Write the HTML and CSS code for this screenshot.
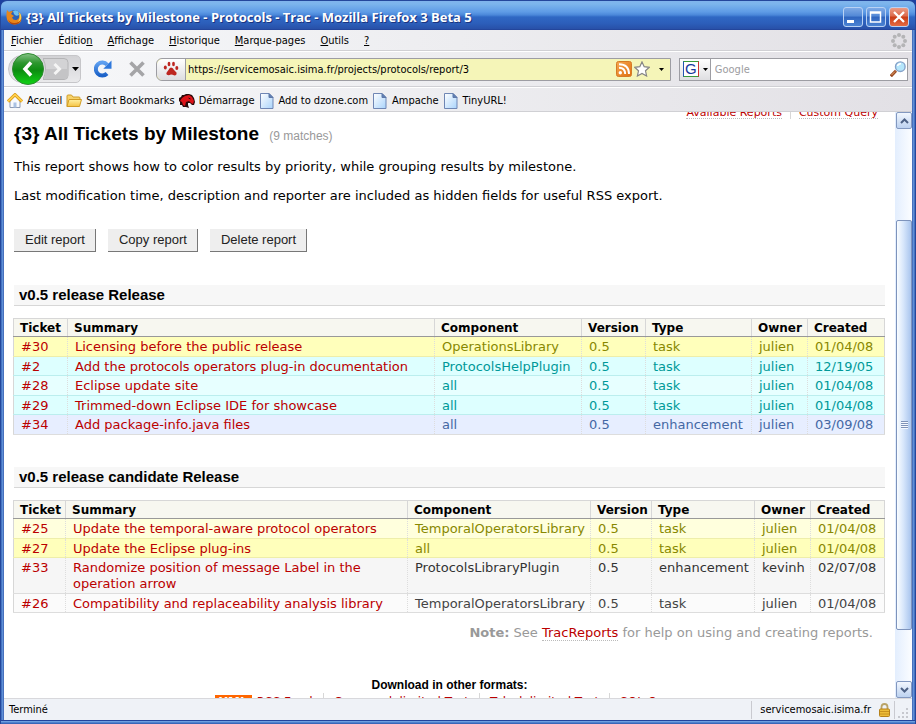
FILE: index.html
```html
<!DOCTYPE html>
<html lang="fr">
<head>
<meta charset="utf-8">
<title>{3} All Tickets by Milestone - Protocols - Trac</title>
<link rel="stylesheet" href="styles.css">
</head>
<body>
<svg class="defs" aria-hidden="true">
  <defs>
    <linearGradient id="paper" x1="0" y1="0" x2="1" y2="1"><stop offset="0" stop-color="#fff"/><stop offset="1" stop-color="#a9d3fb"/></linearGradient>
    <linearGradient id="green" x1="0" y1="0" x2="0" y2="1"><stop offset="0" stop-color="#86c287"/><stop offset=".3" stop-color="#2d972f"/><stop offset=".55" stop-color="#0c8d10"/><stop offset="1" stop-color="#0fd414"/></linearGradient>
    <linearGradient id="blue" x1="0" y1="0" x2="0" y2="1"><stop offset="0" stop-color="#5fa0f0"/><stop offset="1" stop-color="#1c62c8"/></linearGradient>
    <linearGradient id="orange" x1="0" y1="0" x2="1" y2="1"><stop offset="0" stop-color="#f6a850"/><stop offset="1" stop-color="#df6e10"/></linearGradient>
    <linearGradient id="gold" x1="0" y1="0" x2="0" y2="1"><stop offset="0" stop-color="#fff0a0"/><stop offset="1" stop-color="#f4c344"/></linearGradient>
    <symbol id="page" viewBox="0 0 16 16"><path d="M1.500 .5h8.500l4 4v11h-12.500z" fill="url(#paper)" stroke="#6f86b4"/><path d="M10 .5v4h4z" fill="#5f80b5" stroke="#5f78a8"/></symbol>
  </defs>
</svg>
<div class="window">
  <header class="titlebar">
    <svg class="icon" viewBox="0 0 16 16"><circle cx="8.500" cy="7.500" r="6.500" fill="#2b62b8"/><path d="M7 2q3-2 6 1-1 1 0 3-3 2-5-1z" fill="#6fc0ee"/><path d="M1 1l2 2q2-1 4-1L5 5l3 2-2 1.500q1 3 4.500 2.500 3-1 3-5l-1-3q3 2.500 3 6 0 6.500-7 6.500Q1 15 .5 8 .3 4 1 1z" fill="#e8861c"/><path d="M2 10q2 4.500 7 4 4 0 6-4-1 5.500-7 5.500-4.500 0-6-5.500z" fill="#b4480e"/><path d="M13 3q3 3 2 7-1 2-3 3 2.500-4 1-10z" fill="#ffd24a"/></svg>
    <h1 class="caption">{3} All Tickets by Milestone - Protocols - Trac - Mozilla Firefox 3 Beta 5</h1>
    <button class="winbtn" aria-label="Réduire"><svg viewBox="0 0 18 18"><path d="M3 12h7v3H3z" fill="#fff"/></svg></button>
    <button class="winbtn" aria-label="Agrandir"><svg viewBox="0 0 18 18"><path d="M3.500 4h10v10h-10zM3 5h11" fill="none" stroke="#fff" stroke-width="1.500"/></svg></button>
    <button class="winbtn close" aria-label="Fermer"><svg viewBox="0 0 18 18"><path d="M4 4l10 10M14 4L4 14" stroke="#fff" stroke-width="2.300"/></svg></button>
  </header>
  <div class="chrome">
    <nav class="menubar">
      <button><u>F</u>ichier</button><button>Éditio<u>n</u></button><button><u>A</u>ffichage</button><button><u>H</u>istorique</button><button><u>M</u>arque-pages</button><button><u>O</u>utils</button><button><u>?</u></button>
      <svg class="icon throbber" viewBox="0 0 16 16" fill="#b4b4b6"><circle cx="8" cy="2" r="2"/><circle cx="12.300" cy="3.700" r="2"/><circle cx="14" cy="8" r="2"/><circle cx="12.300" cy="12.300" r="2"/><circle cx="8" cy="14" r="2"/><circle cx="3.700" cy="12.300" r="2"/><circle cx="2" cy="8" r="2"/><circle cx="3.700" cy="3.700" r="2"/></svg>
    </nav>
    <div class="navbar">
      <div class="history">
        <button class="back" aria-label="Précédente"><svg viewBox="0 0 32 32"><circle cx="16" cy="16" r="15.500" fill="url(#green)" stroke="#2e8a30"/><path d="M19 9.500L13 16l6 6.500" fill="none" stroke="#fff" stroke-width="3.500"/></svg></button>
        <button class="forward" aria-label="Suivante"><svg viewBox="0 0 26 24"><path d="M0 1.500h21q4 0 4 4v13q0 4-4 4H0q5-10.500 0-21z" fill="#d3d3d5" stroke="#b4b4b6"/><path d="M0 12h25v7q0 3-4 3H1q2-5 2-10z" fill="#c4c4c6"/><path d="M11.500 7l5 5-5 5" fill="none" stroke="#f5f5f5" stroke-width="3"/></svg></button>
        <button class="drop" aria-label="Pages récentes"><svg viewBox="0 0 7 4"><path d="M0 0h7L3.500 4z"/></svg></button>
      </div>
      <button class="tool" aria-label="Actualiser"><svg viewBox="0 0 18 18"><path d="M13 13.500A6.500 6.500 0 1 1 13.200 4.700" fill="none" stroke="url(#blue)" stroke-width="4"/><path d="M17.500 .5v8.300H9.300z" fill="#2f78dc"/></svg></button>
      <button class="tool" aria-label="Arrêter"><svg viewBox="0 0 18 18"><path d="M2.500 2.500l13 13M15.500 2.500l-13 13" stroke="#a5a5a7" stroke-width="3.600"/></svg></button>
      <div class="urlbar">
        <span class="site"><svg class="icon" viewBox="0 0 16 16" fill="#bd2620"><ellipse cx="6" cy="3" rx="1.400" ry="2.300"/><ellipse cx="10.500" cy="3" rx="1.400" ry="2.300"/><ellipse cx="2.300" cy="6.500" rx="1.500" ry="2"/><ellipse cx="13.800" cy="7" rx="1.500" ry="2"/><path d="M8 6.500q2 0 3 2.500l2.500 2.500q.5 3-2 3-2-1-3.500-1-2 1-3.500.5-2-1-.5-3L5.500 9Q6.500 6.500 8 6.500z"/></svg></span>
        <input class="address" type="text" aria-label="Adresse" value="https://servicemosaic.isima.fr/projects/protocols/report/3">
        <svg class="icon" viewBox="0 0 16 16"><rect x=".5" y=".5" width="15" height="15" rx="2" fill="url(#orange)" stroke="#d57a25"/><circle cx="4.300" cy="11.700" r="1.700" fill="#fff"/><path d="M3 6.800q6 0 6.200 6.200M3 3.200q10 0 10 9.800" fill="none" stroke="#fff" stroke-width="1.900"/></svg>
        <svg class="icon star" viewBox="0 0 16 16"><path d="M8 .9l2.200 4.800 5.100.6-3.800 3.500 1.100 5.200L8 12.500 3.400 15l1.100-5.200L.7 6.300l5.100-.6z" fill="#fff" stroke="#858585" stroke-width="1.200"/></svg>
        <button class="arrow" aria-label="Adresses récentes"><svg viewBox="0 0 5 3"><path d="M0 0h5L2.500 3z"/></svg></button>
      </div>
      <div class="search">
        <button class="engine" aria-label="Moteur de recherche"><span class="g">G</span><svg class="tri" viewBox="0 0 5 3"><path d="M0 0h5L2.500 3z"/></svg></button>
        <input type="text" aria-label="Recherche" placeholder="Google">
        <svg class="icon" viewBox="0 0 16 16"><path d="M.8 15.200L6 9.800" stroke="#9a4a22" stroke-width="3"/><path d="M1.500 14L5 10.500" stroke="#eba56a" stroke-width="1"/><circle cx="10.300" cy="5.700" r="4.800" fill="#b5e6fb" stroke="#86a3ca" stroke-width="1.400"/><path d="M7.500 5q.8-2.500 3.500-2.300" fill="none" stroke="#fff" stroke-width="1.500"/></svg>
      </div>
    </div>
    <nav class="bookmarks">
      <a href="#"><svg class="icon" viewBox="0 0 16 16"><path d="M3 7v7.500h10V7L8 2z" fill="#f8fafd" stroke="#8d9bb4"/><path d="M1 8.500L8 1.700l7 6.800" fill="none" stroke="#d89a17" stroke-width="3.200"/><path d="M1 8.300L8 1.700l7 6.600" fill="none" stroke="#ffcf4c" stroke-width="1.600"/><path d="M6.500 9.500h3v5h-3z" fill="#aac2e4"/></svg>Accueil</a>
      <a href="#"><svg class="icon" viewBox="0 0 16 16"><path d="M1 13.500V3q0-1 1-1h3.500l1.500 2H13q1 0 1 1v2" fill="#f6d26a" stroke="#cf9d2a"/><path d="M3 6.500h12.500l-2 7H1z" fill="url(#gold)" stroke="#d19c25"/></svg>Smart Bookmarks</a>
      <a href="#"><svg class="icon" viewBox="0 0 16 16"><path d="M0 5l2-1 1-2 2 0 2-1 3 0 3 1 2 3 1 4-1 3-2 0-2-2-2 0 0 2 1 3-3-1-3 0-1-2-2 0 0-3-1-1z" fill="#2a0a0a"/><path d="M3 5l3-2 4-1 3 2 2 4-1 3-2-1-2-2-3 1-1 4-2-1-1-3-2-1z" fill="#dc1218"/><path d="M9.500 5l2 1" stroke="#2a0a0a"/></svg>Démarrage</a>
      <a href="#"><svg class="icon"><use href="#page"/></svg>Add to dzone.com</a>
      <a href="#"><svg class="icon"><use href="#page"/></svg>Ampache</a>
      <a href="#"><svg class="icon"><use href="#page"/></svg>TinyURL!</a>
    </nav>
  </div>
  <div class="viewport">
    <main class="page">
      <ul class="ctxtnav"><li><a href="#">Available Reports</a></li><li><a href="#">Custom Query</a></li></ul>
      <h1 class="heading">{3} All Tickets by Milestone <small>(9 matches)</small></h1>
      <p>This report shows how to color results by priority, while grouping results by milestone.</p>
      <p>Last modification time, description and reporter are included as hidden fields for useful RSS export.</p>
      <div class="actions"><button>Edit report</button><button>Copy report</button><button>Delete report</button></div>

      <h2>v0.5 release Release</h2>
      <table class="tickets first">
        <colgroup><col class="ticket"><col><col class="component"><col class="version"><col class="type"><col class="owner"><col class="created"></colgroup>
        <thead><tr><th>Ticket</th><th>Summary</th><th>Component</th><th>Version</th><th>Type</th><th>Owner</th><th>Created</th></tr></thead>
        <tbody>
          <tr class="high odd"><td><a href="#">#30</a></td><td><a href="#">Licensing before the public release</a></td><td>OperationsLibrary</td><td>0.5</td><td>task</td><td>julien</td><td>01/04/08</td></tr>
          <tr class="low odd"><td><a href="#">#2</a></td><td><a href="#">Add the protocols operators plug-in documentation</a></td><td>ProtocolsHelpPlugin</td><td>0.5</td><td>task</td><td>julien</td><td>12/19/05</td></tr>
          <tr class="low"><td><a href="#">#28</a></td><td><a href="#">Eclipse update site</a></td><td>all</td><td>0.5</td><td>task</td><td>julien</td><td>01/04/08</td></tr>
          <tr class="low odd"><td><a href="#">#29</a></td><td><a href="#">Trimmed-down Eclipse IDE for showcase</a></td><td>all</td><td>0.5</td><td>task</td><td>julien</td><td>01/04/08</td></tr>
          <tr class="trivial"><td><a href="#">#34</a></td><td><a href="#">Add package-info.java files</a></td><td>all</td><td>0.5</td><td>enhancement</td><td>julien</td><td>03/09/08</td></tr>
        </tbody>
      </table>

      <h2>v0.5 release candidate Release</h2>
      <table class="tickets second">
        <colgroup><col class="ticket"><col><col class="component"><col class="version"><col class="type"><col class="owner"><col class="created"></colgroup>
        <thead><tr><th>Ticket</th><th>Summary</th><th>Component</th><th>Version</th><th>Type</th><th>Owner</th><th>Created</th></tr></thead>
        <tbody>
          <tr class="high"><td><a href="#">#25</a></td><td><a href="#">Update the temporal-aware protocol operators</a></td><td>TemporalOperatorsLibrary</td><td>0.5</td><td>task</td><td>julien</td><td>01/04/08</td></tr>
          <tr class="high odd"><td><a href="#">#27</a></td><td><a href="#">Update the Eclipse plug-ins</a></td><td>all</td><td>0.5</td><td>task</td><td>julien</td><td>01/04/08</td></tr>
          <tr class="normal odd"><td><a href="#">#33</a></td><td><a href="#">Randomize position of message Label in the operation arrow</a></td><td>ProtocolsLibraryPlugin</td><td>0.5</td><td>enhancement</td><td>kevinh</td><td>02/07/08</td></tr>
          <tr class="normal"><td><a href="#">#26</a></td><td><a href="#">Compatibility and replaceability analysis library</a></td><td>TemporalOperatorsLibrary</td><td>0.5</td><td>task</td><td>julien</td><td>01/04/08</td></tr>
        </tbody>
      </table>
      <p class="note"><strong>Note:</strong> See <a href="#">TracReports</a> for help on using and creating reports.</p>
      <section class="formats">
        <h3>Download in other formats:</h3>
        <ul><li><span class="xml">XML</span><a href="#">RSS Feed</a></li><li><a href="#">Comma-delimited Text</a></li><li><a href="#">Tab-delimited Text</a></li><li><a href="#">SQL Query</a></li></ul>
      </section>
    </main>
    <div class="scrollbar">
      <button aria-label="Défiler vers le haut"><svg viewBox="0 0 9 6"><path d="M1 5l3.500-3.500L8 5" fill="none" stroke="#4d6185" stroke-width="2"/></svg></button>
      <div class="track"><div class="thumb"><i></i></div></div>
      <button aria-label="Défiler vers le bas"><svg viewBox="0 0 9 6"><path d="M1 1l3.500 3.500L8 1" fill="none" stroke="#4d6185" stroke-width="2"/></svg></button>
    </div>
  </div>
  <footer class="status">
    <span class="state">Terminé</span>
    <span class="host">servicemosaic.isima.fr<svg class="lock" viewBox="0 0 11 14"><path d="M2.500 7V4q0-3 3-3t3 3v3" fill="none" stroke="#b9a468" stroke-width="1.800"/><rect x=".5" y="6" width="10" height="7.500" rx="1" fill="#edbd38" stroke="#b5811a"/><path d="M1 8.500h9M1 11h9" stroke="#c8921e"/></svg></span>
    <svg class="grip" viewBox="0 0 12 12" fill="#c6c8ce"><path d="M8 0h2v2H8zM4 4h2v2H4zM8 4h2v2H8zM0 8h2v2H0zM4 8h2v2H4zM8 8h2v2H8z"/></svg>
  </footer>
</div>
</body>
</html>
```
FILE: styles.css
```css
* { box-sizing: border-box; }
body { margin: 0; background: #1d3fa0; font: 11px/14px "DejaVu Sans Condensed", "DejaVu Sans", sans-serif; color: #000; }
button, input { font: inherit; color: inherit; border: 0; padding: 0; margin: 0; background: none; }
svg { display: block; flex: none; }
.defs { position: absolute; width: 0; height: 0; }
.icon { width: 16px; height: 16px; }

.window {
  display: flex; flex-direction: column; height: 100vh; overflow: hidden;
  border: solid #24479b; border-width: 1px 1px 0; border-radius: 7px 7px 0 0;
  background: linear-gradient(90deg, #3865b8, #6d9ee0 2px, #23439b 3px, #23439b calc(100% - 3px), #6d9ee0 calc(100% - 2px), #3865b8);
  padding: 0 3px;
}
.titlebar {
  display: flex; align-items: center; gap: 3px; flex: none; height: 29px; margin: 0 -3px; padding: 2px 6px 0 5px;
  background: linear-gradient(#80b4ec 0, #7cb5ec 3px, #5e9be6 11px, #4a87d9 14px, #2f68c4 16px, #2c5fbb 22px, #2850a8 28px, #1f3c90 29px);
}
.caption { flex: 1; margin: 0; padding-left: 1px; font: bold 13px/16px "Open Sans", sans-serif; color: #fff; text-shadow: 1px 1px 0 #1b3480; white-space: nowrap; }
.winbtn { width: 20px; height: 20px; border: 1px solid #b9d2f4; border-radius: 3px; background: linear-gradient(#7eaae6, #5288d6 45%, #2f65bf 50%, #4b83d3); }
.winbtn.close { background: linear-gradient(#eb9b85, #dc6a4c 45%, #c93c16 50%, #e56b43); }

.chrome { flex: none; background: linear-gradient(90deg, #f7f8fa, #ededf0 50%, #e2e0e5); }
.menubar { display: flex; align-items: center; gap: 15px; height: 21px; padding: 1px 5px 0 7px; border-bottom: 1px solid #d0d0d4; }
.throbber { margin-left: auto; }
.navbar { display: flex; align-items: center; height: 36px; padding: 0 4px; border-top: 1px solid #fff; border-bottom: 1px solid #d0d0d4; }
.history { display: flex; align-items: center; width: 73px; height: 28px; border: 1px solid #c6c6c9; border-radius: 14px 5px 5px 14px; background: linear-gradient(#d2d2d5, #e9e9eb); padding-left: 3px; margin-right: 13px; }
.back { width: 32px; height: 32px; z-index: 1; }
.forward { width: 26px; height: 24px; margin-left: -1px; }
.drop { width: 7px; margin-left: 3px; }
.tool { width: 18px; height: 18px; margin-right: 16px; }
.tool + .urlbar { margin-left: -6px; }
.urlbar { display: flex; align-items: center; gap: 2px; flex: 517; min-width: 0; height: 23px; border: 1px solid #9d9da3; border-radius: 6px 0 0 6px; background: #f5f5b8; }
.site { display: flex; align-items: center; justify-content: center; width: 29px; height: 21px; border-right: 1px solid #9d9da3; border-radius: 6px 0 0 6px; background: linear-gradient(#fff, #dddde0); }
.address, .search input { flex: 1; min-width: 0; padding-top: 2px; }
.search input { padding-left: 4px; }
.arrow { width: 5px; margin: 0 6px 0 7px; }
.search { display: flex; align-items: center; flex: 228; min-width: 0; height: 23px; margin-left: 8px; border: 1px solid #9d9da3; background: #fff; padding-right: 1px; }
.search input::placeholder { color: #9c9ca0; opacity: 1; }
.engine { display: flex; align-items: center; gap: 4px; width: 31px; height: 21px; padding-left: 3px; border-right: 1px solid #9d9da3; background: linear-gradient(#fff, #dedee1); }
.g { width: 16px; height: 16px; border: 1px solid #3a9a3a; border-color: #3a9a3a #c33 #3a9a3a #2454b4; background: #fff; color: #16379c; font: 15px/14px "Liberation Sans", sans-serif; }
.tri { width: 5px; height: 3px; }
.bookmarks { display: flex; align-items: center; gap: 4px; height: 25px; padding: 2px 0 0 3px; border-top: 1px solid #fff; border-bottom: 1px solid #d0d0d4; }
.bookmarks a { display: flex; align-items: center; gap: 4px; color: #000; text-decoration: none; white-space: nowrap; }

.viewport { display: flex; flex: 1; min-height: 0; background: #fff; }
.page { flex: 1; min-width: 0; overflow: hidden; padding: 0 10px; font: 13px/17px "DejaVu Sans", sans-serif; }
.page a { color: #b00; text-decoration: none; }
.ctxtnav { display: flex; align-items: flex-end; justify-content: flex-end; height: 7px; margin: 0; padding: 0 7px 0 0; overflow: hidden; list-style: none; font-size: 11px; line-height: 11px; }
.ctxtnav a { display: block; border-bottom: 1px dotted #bbb; }
.ctxtnav li + li { margin-left: 8px; padding-left: 8px; border-left: 1px solid #d7d7d7; }
.heading { margin: 2px 0 9px; font: bold 19px/25px "Liberation Sans", sans-serif; }
.heading small { margin-left: 5px; font-size: 12px; font-weight: normal; color: #999; }
.page p { margin: 0 0 12px; }
.actions { display: flex; gap: 12px; margin: 25px 0 33px; }
.actions button { height: 23px; padding: 0 10px 0 11px; border: solid #777; border-width: 0 1px 1px 0; background: #eee; color: #222; font: 13px/20px "Liberation Sans", sans-serif; }
.page h2 { margin: 0 0 12px; padding: 0 5px; height: 21px; border-bottom: 1px solid #d7d7d7; background: #f7f7f7; font: bold 15px/20px "Liberation Sans", sans-serif; }

.tickets { width: calc(100% + 1px); margin: 0 0 32px -1px; table-layout: fixed; border-collapse: collapse; border: 1px solid #d7d7d7; }
.tickets .ticket { width: 54px; }
.tickets .component { width: 147px; }
.tickets .version { width: 64px; }
.tickets .type { width: 106px; }
.tickets .owner { width: 56px; }
.tickets .created { width: 77px; }
.second .ticket { width: 52px; }
.second .component { width: 183px; }
.second .version { width: 61px; }
.second .type { width: 103px; }
.second .created { width: 74px; }
.tickets th { padding: 1px 6px 0; border: 1px solid #d7d7d7; border-bottom-color: #999; background: #f7f7f0; font-size: 12px; line-height: 16px; text-align: left; }
.tickets td { padding: 2px 0 1px 7px; border: 1px dotted #ddd; border-bottom: 1px solid #ddd; line-height: 16px; vertical-align: top; }
.tickets tr:nth-child(even) td { padding-bottom: 0; }
.tickets .high td { background: #ffffdd; border-bottom-color: #eeeeaa; color: #880; }
.tickets .high.odd td { background: #ffffbb; }
.tickets .low td { background: #e7ffff; border-bottom-color: #bbeeee; color: #099; }
.tickets .low.odd td { background: #ddffff; }
.tickets .trivial td { background: #e7eeff; color: #4468a4; }
.tickets .normal td { background: #fbfbfb; color: #444; }
.tickets .normal.odd td { background: #f6f6f6; color: #333; }
.page .note { margin: -21px 12px 36px; text-align: right; color: #999; }
.note a, .formats a { border-bottom: 1px dotted #bbb; }
.formats { text-align: center; }
.formats h3 { margin: 0; font: bold 12px/16px "Liberation Sans", sans-serif; }
.formats ul { display: flex; justify-content: center; margin: 0; padding: 0; list-style: none; font-size: 12px; line-height: 18px; }
.formats li { padding: 0 10px; white-space: nowrap; }
.formats li + li { border-left: 1px solid #d7d7d7; }
.xml { display: inline-block; margin-right: 5px; padding: 0 4px; background: #f60; color: #fff; font-weight: bold; line-height: 14px; }

.scrollbar { display: flex; flex-direction: column; flex: none; width: 17px; background: linear-gradient(90deg, #e3eefe, #fbfdff); }
.scrollbar button { display: flex; align-items: center; justify-content: center; height: 17px; margin: 0 0 0 1px; border: 1px solid #8298c0; border-radius: 2px; background: linear-gradient(#f2f7fe, #bdd2f0); }
.scrollbar button svg { width: 9px; height: 6px; }
.track { flex: 1; display: grid; grid-template-rows: 91fr 410fr 51fr; }
.thumb { grid-row: 2; display: flex; align-items: center; justify-content: center; margin-left: 1px; border: 1px solid #7d93bc; border-radius: 2px; background: linear-gradient(90deg, #fafdff, #d8e7fb 45%, #a9c5ee); }
.thumb i { width: 7px; height: 8px; background: repeating-linear-gradient(#7f93b8 0 1px, #f5f9ff 1px 2px); }

.status { display: flex; align-items: center; flex: none; height: 22px; padding: 0 2px 0 5px; border-top: 1px solid #d8d8dc; background: #eff2f7; }
.window::after { content: ""; flex: none; height: 4px; margin: 0 -3px; background: linear-gradient(#23439b 0 1px, #6d9ee0 1px 2px, #4f80cc 2px 3px, #3865b8 3px); }
.state { flex: 1; }
.host { display: flex; align-items: center; gap: 8px; height: 18px; padding: 0 4px 0 8px; border: solid #c9cad0; border-width: 0 1px; }
.lock { width: 11px; height: 14px; }
.grip { width: 12px; height: 12px; margin-left: 3px; align-self: flex-end; }
```
